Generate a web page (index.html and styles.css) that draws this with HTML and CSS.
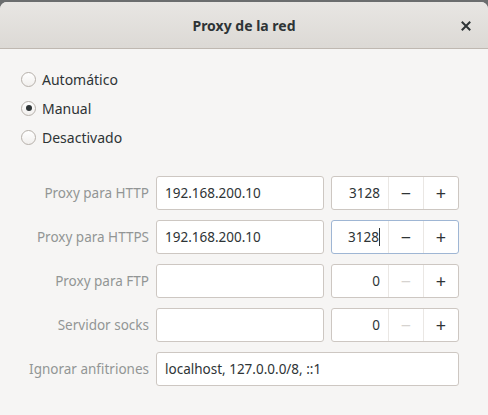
FILE: index.html
```html
<!DOCTYPE html>
<html lang="es">
<head>
<meta charset="utf-8">
<title>Proxy de la red</title>
<link rel="stylesheet" href="styles.css">
</head>
<body>
<div class="window">
  <header class="titlebar">
    <span class="title">Proxy de la red</span>
    <button class="close" aria-label="Cerrar">
      <svg width="10" height="10" viewBox="0 0 10 10"><path d="M1.5 1.5 L8.5 8.5 M8.5 1.5 L1.5 8.5" stroke="#2e3436" stroke-width="2" stroke-linecap="square"/></svg>
    </button>
  </header>
  <main class="content">
    <div class="radios">
      <label class="radio"><span class="dot"></span>Automático</label>
      <label class="radio checked"><span class="dot"></span>Manual</label>
      <label class="radio"><span class="dot"></span>Desactivado</label>
    </div>
    <div class="form">
      <span class="label">Proxy para HTTP</span>
      <div class="entry">192.168.200.10</div>
      <div class="spin">
        <div class="spin-value">3128</div>
        <div class="spin-btn">&minus;</div>
        <div class="spin-btn">+</div>
      </div>

      <span class="label">Proxy para HTTPS</span>
      <div class="entry">192.168.200.10</div>
      <div class="spin focused">
        <div class="spin-value">3128<span class="caret"></span></div>
        <div class="spin-btn">&minus;</div>
        <div class="spin-btn">+</div>
      </div>

      <span class="label">Proxy para FTP</span>
      <div class="entry"></div>
      <div class="spin">
        <div class="spin-value">0</div>
        <div class="spin-btn disabled">&minus;</div>
        <div class="spin-btn">+</div>
      </div>

      <span class="label">Servidor socks</span>
      <div class="entry"></div>
      <div class="spin">
        <div class="spin-value">0</div>
        <div class="spin-btn disabled">&minus;</div>
        <div class="spin-btn">+</div>
      </div>

      <span class="label">Ignorar anfitriones</span>
      <div class="entry wide">localhost, 127.0.0.0/8, ::1</div>
    </div>
  </main>
</div>
</body>
</html>
```
FILE: styles.css
```css
* { box-sizing: border-box; }
html, body { margin: 0; padding: 0; }
body {
  background: #6b6d6e;
  font-family: "Noto Sans", "DejaVu Sans", sans-serif;
  font-size: 13.5px;
  color: #2e3436;
  width: 488px;
  height: 415px;
  overflow: hidden;
}
.window {
  margin-top: 2px;
  height: 413px;
  background: #f6f5f4;
  border-radius: 7px 7px 0 0;
  overflow: hidden;
}
.titlebar {
  height: 47px;
  background: linear-gradient(#e8e6e3, #dcd9d5);
  border-bottom: 1px solid #bfb8b1;
  display: flex;
  align-items: center;
  justify-content: center;
  position: relative;
}
.title {
  font-weight: bold;
  font-size: 14px;
  color: #2e3436;
}
.close {
  position: absolute;
  right: 16px;
  top: 18px;
  width: 12px;
  height: 12px;
  padding: 0;
  border: 0;
  background: none;
  display: flex;
  align-items: center;
  justify-content: center;
}
.content {
  padding: 20px 29px 0 21px;
}
.radios {
  display: flex;
  flex-direction: column;
  gap: 9px;
}
.radio {
  display: flex;
  align-items: center;
  height: 20px;
  gap: 6px;
  font-size: 14px;
  color: #2e3436;
}
.dot {
  width: 15px;
  height: 15px;
  border-radius: 50%;
  border: 1px solid #b6b0aa;
  background: linear-gradient(#ffffff, #f1efed);
  display: flex;
  align-items: center;
  justify-content: center;
}
.checked .dot::after {
  content: "";
  width: 6px;
  height: 6px;
  border-radius: 50%;
  background: #2e3436;
}
.form {
  margin-top: 29px;
  display: grid;
  grid-template-columns: 128px 168px 128px;
  column-gap: 7px;
  row-gap: 10px;
  align-items: center;
}
.label {
  text-align: right;
  color: #929595;
  white-space: nowrap;
}
.entry {
  height: 34px;
  background: #ffffff;
  border: 1px solid #cdc7c2;
  border-radius: 3px;
  padding: 0 8px;
  display: flex;
  align-items: center;
  white-space: nowrap;
}
.entry.wide { grid-column: 2 / 4; }
.spin {
  height: 34px;
  background: #ffffff;
  border: 1px solid #cdc7c2;
  border-radius: 3px;
  display: flex;
}
.spin.focused { border-color: #9fb6d4; }
.spin-value {
  flex: 1;
  display: flex;
  align-items: center;
  justify-content: flex-end;
  padding-right: 8px;
}
.caret {
  display: inline-block;
  width: 1px;
  height: 18px;
  background: #2e3436;
}
.spin-btn {
  width: 35px;
  border-left: 1px solid #eae7e4;
  display: flex;
  align-items: center;
  justify-content: center;
  font-size: 18px;
  color: #2e3436;
}
.spin-btn.disabled { color: #d6d3d0; }
```
